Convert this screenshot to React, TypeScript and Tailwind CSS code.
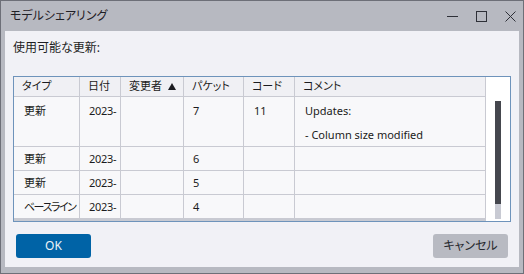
const jp = "font-['Noto_Sans','Noto_Sans_CJK_JP',sans-serif] [font-feature-settings:'palt']";

const cols = ["w-[66px]", "w-[41px]", "w-[63px]", "w-[60px]", "w-[51px]", "w-[191px]"];

const rows = [
  { type: "更新", packet: "7", code: "11", comment: ["Updates:", "", "- Column size modified"], tall: true },
  { type: "更新", packet: "6", code: "", comment: [], tall: false },
  { type: "更新", packet: "5", code: "", comment: [], tall: false },
  { type: "ベースライン", packet: "4", code: "", comment: [], tall: false },
];

function TitleIcons() {
  return (
    <div className="flex items-center gap-[18px] pr-[7px] text-[#2e3038]">
      <svg width="11" height="11" viewBox="0 0 11 11">
        <line x1="0" y1="5.5" x2="11" y2="5.5" stroke="currentColor" strokeWidth="1" />
      </svg>
      <svg width="11" height="11" viewBox="0 0 11 11">
        <rect x="0.5" y="0.5" width="10" height="10" fill="none" stroke="currentColor" strokeWidth="1" />
      </svg>
      <svg width="11" height="11" viewBox="0 0 11 11">
        <path d="M0.5 0.5 L10.5 10.5 M10.5 0.5 L0.5 10.5" stroke="currentColor" strokeWidth="1" />
      </svg>
    </div>
  );
}

export default function App() {
  return (
    <div className={`w-[524px] h-[274px] bg-[#b7b9c1] border border-[#6d6f78] flex flex-col ${jp}`}>
      {/* title bar */}
      <div className="h-[30px] shrink-0 flex items-center justify-between pl-[9px]">
        <span className="text-[12px] text-[#1f2026]">モデルシェアリング</span>
        <TitleIcons />
      </div>

      <div className="mx-[4px] h-[236px] bg-[#f1f1f6] flex flex-col">
        <div className="pl-[8px] pt-[10px] text-[12px] leading-[14px] text-[#1e1e24]">使用可能な更新:</div>

        {/* table */}
        <div className="mt-[21px] mx-[8px] h-[146px] border border-[#6e93bb] flex text-[11px] text-[#1b1b20]">
          <div className="w-[472px] flex flex-col bg-[#f8f8fa]">
            <div className="h-[20px] shrink-0 flex bg-[#f0f0f4] border-b border-[#c9cad2]">
              {["タイプ", "日付", "変更者", "パケット", "コード", "コメント"].map((h, i) => (
                <div key={h} className={`${cols[i]} border-r border-[#c9cad2] pl-[8px] flex items-center gap-[6px]`}>
                  <span>{h}</span>
                  {h === "変更者" && (
                    <svg width="8" height="7" viewBox="0 0 8 7">
                      <path d="M4 0 L8 7 L0 7 Z" fill="#1b1b20" />
                    </svg>
                  )}
                </div>
              ))}
            </div>
            {rows.map((r, idx) => (
              <div key={idx} className={`${r.tall ? "h-[50px]" : "h-[24px]"} shrink-0 flex border-b border-[#c9cad2] leading-[12px]`}>
                <div className={`${cols[0]} border-r border-[#c9cad2] pl-[10px] ${r.tall ? "pt-[8px]" : "pt-[6px]"} whitespace-nowrap ${r.type === "ベースライン" ? "tracking-[-1.5px]" : ""}`}>{r.type}</div>
                <div className={`${cols[1]} border-r border-[#c9cad2] pl-[9px] ${r.tall ? "pt-[8px]" : "pt-[6px]"} whitespace-nowrap tracking-[-0.3px]`}>2023-</div>
                <div className={`${cols[2]} border-r border-[#c9cad2]`} />
                <div className={`${cols[3]} border-r border-[#c9cad2] pl-[9px] ${r.tall ? "pt-[8px]" : "pt-[6px]"}`}>{r.packet}</div>
                <div className={`${cols[4]} border-r border-[#c9cad2] pl-[10px] ${r.tall ? "pt-[8px]" : "pt-[6px]"}`}>{r.code}</div>
                <div className={`${cols[5]} border-r border-[#c9cad2] pl-[10px] ${r.tall ? "pt-[8px]" : "pt-[6px]"} flex flex-col`}>
                  {r.comment.map((c, j) => (
                    <span key={j} className="h-[12px] whitespace-nowrap">{c}</span>
                  ))}
                </div>
              </div>
            ))}
            <div className="flex-1" />
            <div className="h-[2px] shrink-0 bg-[#c8cad2]" />
          </div>
          <div className="flex-1 bg-white pl-[9px] pt-[24px]">
            <div className="w-[6px] flex flex-col">
              <div className="h-[103px] bg-[#45474e]" />
              <div className="h-[15px] bg-[#c8cad3]" />
            </div>
          </div>
        </div>

        {/* buttons */}
        <div className="mt-auto mb-[9px] px-[11px] flex justify-between text-[12px]">
          <button className="w-[75px] h-[24px] rounded-[3px] bg-[#0063a6] text-[#eef3f8]">OK</button>
          <button className="w-[75px] h-[24px] rounded-[3px] bg-[#b8bac2] text-[#26272d]">キャンセル</button>
        </div>
      </div>
    </div>
  );
}
